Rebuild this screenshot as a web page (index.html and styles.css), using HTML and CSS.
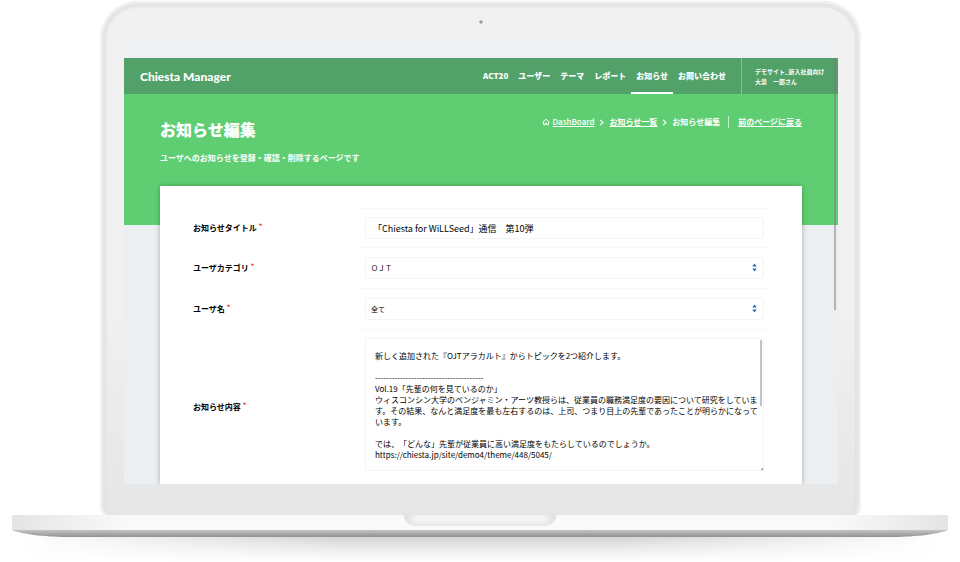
FILE: index.html
```html
<!DOCTYPE html>
<html lang="ja">
<head>
<meta charset="utf-8">
<meta name="viewport" content="width=device-width, initial-scale=1">
<title>お知らせ編集</title>
<link rel="stylesheet" href="styles.css">
</head>
<body>
<div class="lid">
  <div class="camera"></div>
  <div class="screen">
    <div class="strip"></div>
    <header class="bar">
      <a class="brand" href="#">Chiesta Manager</a>
      <nav class="nav">
        <a href="#">ACT20</a>
        <a href="#">ユーザー</a>
        <a href="#">テーマ</a>
        <a href="#">レポート</a>
        <a href="#" class="active">お知らせ</a>
        <a href="#">お問い合わせ</a>
      </nav>
      <div class="user">デモサイト_新入社員向け<br>大泉　一郎さん</div>
    </header>
    <main class="page">
      <div class="hero">
        <div>
          <h1>お知らせ編集</h1>
          <p>ユーザへのお知らせを登録・確認・削除するページです</p>
        </div>
        <nav class="crumbs">
          <svg class="home" viewBox="0 0 8 8"><path d="M.5 4.300 4 1.200l3.500 3.100M1.600 4v2.800h1.700V5.200h1.400v1.600h1.700V4"/></svg>
          <a href="#">DashBoard</a>
          <svg class="chev" viewBox="0 0 4 6"><path d="M.8.8 3.200 3 .8 5.200"/></svg>
          <a href="#">お知らせ一覧</a>
          <svg class="chev" viewBox="0 0 4 6"><path d="M.8.8 3.200 3 .8 5.200"/></svg>
          <span>お知らせ編集</span>
          <a href="#" class="back">前のページに戻る</a>
        </nav>
      </div>
      <form class="card">
        <div class="row">
          <label for="title">お知らせタイトル<sup>*</sup></label>
          <div class="cell"><input id="title" type="text" value="「Chiesta for WiLLSeed」通信　第10弾"></div>
        </div>
        <div class="row">
          <label for="category">ユーザカテゴリ<sup>*</sup></label>
          <div class="cell">
            <select id="category"><option>ＯＪＴ</option></select>
            <svg class="arrows" viewBox="0 0 5 9"><path d="M2.500 .5 4.700 3.500H.3zM.3 5.500h4.400L2.500 8.500z"/></svg>
          </div>
        </div>
        <div class="row">
          <label for="name">ユーザ名<sup>*</sup></label>
          <div class="cell">
            <select id="name"><option>全て</option></select>
            <svg class="arrows" viewBox="0 0 5 9"><path d="M2.500 .5 4.700 3.500H.3zM.3 5.500h4.400L2.500 8.500z"/></svg>
          </div>
        </div>
        <div class="row">
          <label for="body">お知らせ内容<sup>*</sup></label>
          <div class="cell">
            <textarea id="body" rows="10">新しく追加された『OJTアラカルト』からトピックを2つ紹介します。

---------------------------------------
Vol.19「先輩の何を見ているのか」
ウィスコンシン大学のベンジャミン・アーツ教授らは、従業員の職務満足度の要因について研究をしています。その結果、なんと満足度を最も左右するのは、上司、つまり目上の先輩であったことが明らかになっています。

では、「どんな」先輩が従業員に高い満足度をもたらしているのでしょうか。
https://chiesta.jp/site/demo4/theme/448/5045/</textarea>
            <span class="thumb"></span>
            <span class="grip"></span>
          </div>
        </div>
      </form>
    </main>
    <span class="scroll"></span>
  </div>
</div>
<svg class="base" viewBox="0 0 960 47">
  <defs>
    <linearGradient id="deck"><stop offset="0" stop-color="#e4e4e4"/><stop offset=".06" stop-color="#efefef"/><stop offset=".12" stop-color="#f9f9f9"/><stop offset=".88" stop-color="#f9f9f9"/><stop offset=".94" stop-color="#efefef"/><stop offset="1" stop-color="#e4e4e4"/></linearGradient>
    <linearGradient id="under" x2="0" y2="1"><stop offset="0" stop-color="#c4c4c4"/><stop offset="1" stop-color="#929292"/></linearGradient>
    <linearGradient id="notch" x2="0" y2="1"><stop offset="0" stop-color="#f3f3f3"/><stop offset=".5" stop-color="#f3f3f3"/><stop offset="1" stop-color="#e6e6e6"/></linearGradient>
    <linearGradient id="edge"><stop offset="0" stop-color="#dedede"/><stop offset=".08" stop-color="#dedede" stop-opacity="0"/><stop offset=".92" stop-color="#dedede" stop-opacity="0"/><stop offset="1" stop-color="#dedede"/></linearGradient>
    <linearGradient id="shade" x2="0" y2="1"><stop offset="0" stop-color="#cfcfcf"/><stop offset=".4" stop-color="#e6e6e6"/><stop offset=".7" stop-color="#f4f4f4"/><stop offset="1" stop-color="#fff"/></linearGradient>
    <linearGradient id="fade"><stop offset="0" stop-color="#fff"/><stop offset=".35" stop-color="#fff" stop-opacity="0"/><stop offset=".65" stop-color="#fff" stop-opacity="0"/><stop offset="1" stop-color="#fff"/></linearGradient>
  </defs>
  <path d="M20 20h920v27H20z" fill="url(#shade)"/>
  <path d="M19 20h922v27H19z" fill="url(#fade)"/>
  <path d="M12 15h936c-12 5-38 7-58 7H70c-20 0-46-2-58-7z" fill="url(#under)"/>
  <path d="M48 20h5M371 20h5M584 20h5M902 20h5" stroke="#999" fill="none"/>
  <path d="M12 0h936v15H12z" fill="url(#deck)"/>
  <path d="M404 0h152c0 7-6 11-13 11H417c-7 0-13-4-13-11z" fill="url(#notch)"/>
  <path d="M404 0h152c0 7-6 11-13 11H417c-7 0-13-4-13-11z" fill="url(#edge)"/>
</svg>
</body>
</html>
```
FILE: styles.css
```css
* { box-sizing: border-box; }

body {
  margin: 0;
  background: #fff;
  color: #000;
  font-family: "Noto Sans CJK JP", sans-serif;
  font-size: 8px;
  line-height: 12px;
  text-spacing-trim: space-all;
  overflow: hidden;
}

a { color: inherit; text-decoration: none; }

.lid {
  position: relative;
  margin: 1px 99px -6px 100px;
  padding: 37px 23px 37px 24px;
  border-radius: 38px 38px 16px 16px;
  background: linear-gradient(#f1f1f1, #f0f0f0 60%, #e8e8e8 90%, #e6e6e6);
  box-shadow: inset 0 0 0 2px #f3f3f3, inset 0 0 0 5px #e6e6e6, inset 0 0 2px 6px #e0e0e0;
}

.camera {
  position: absolute;
  top: 19px;
  left: calc(50% - 2px);
  width: 4px;
  height: 4px;
  border: 1px solid #c4c4c4;
  border-radius: 50%;
  background: #888;
}

.screen {
  position: relative;
  background: #ebeff1;
  overflow: hidden;
}

.strip { height: 20px; background: #edf1f3; }

.bar {
  display: flex;
  align-items: stretch;
  height: 36px;
  background: #52a168;
  color: #fff;
  font-weight: 700;
}

.brand {
  margin: 0 auto 0 16px;
  font-family: Lato, sans-serif;
  font-size: 12px;
  font-weight: 900;
  line-height: 37px;
}

.nav { display: flex; margin-right: 10px; font-weight: 900; }

.nav a { padding: 0 5px; line-height: 35px; }

.nav .active { border-bottom: 2px solid #fff; }

.user {
  width: 97px;
  padding: 9px 0 0 13px;
  border-left: 1px solid #86bd95;
  font-size: 6px;
  font-weight: 700;
  line-height: 10px;
}

.page {
  padding: 0 36px;
  background: linear-gradient(#5fce72 131px, transparent 131px);
}

.hero {
  display: flex;
  justify-content: space-between;
  height: 92px;
  color: #fff;
  font-weight: 700;
}

.hero h1 { margin: 23px 0 0; font-size: 16px; font-weight: 900; line-height: 24px; }

.hero p { margin: 11px 0 0; }

.crumbs {
  display: flex;
  align-items: center;
  align-self: flex-start;
  gap: 5px;
  margin-top: 22px;
}

.crumbs a { text-decoration: underline; }

.crumbs a:first-of-type { font-weight: 500; }

.crumbs svg { fill: none; stroke: #fff; }

.home { width: 8px; height: 8px; margin-right: -2px; }

.chev { width: 5px; height: 7px; }

.crumbs .back {
  margin-left: 3px;
  padding-left: 9px;
  border-left: 1px solid #c6edcd;
}

.card {
  padding: 22px 33px 0;
  background: #fff;
  box-shadow: 0 0 5px rgba(0, 0, 0, .3);
}

.row {
  display: grid;
  grid-template-columns: 166px 1fr;
  align-items: center;
}

.row label { font-weight: 700; }

.row sup {
  margin-left: 2px;
  color: #e23b30;
  font-size: 7px;
  line-height: 0;
  vertical-align: 2px;
}

.cell {
  position: relative;
  padding: 9px 5px 9px 6px;
  border-top: 1px solid #f7f7f7;
}

.row:first-child .cell { padding-top: 8px; padding-bottom: 8px; }

.row:last-child .cell { padding-top: 8px; padding-bottom: 13px; }

input, select, textarea {
  display: block;
  width: 100%;
  height: 22px;
  margin: 0;
  border: 1px solid #f4f4f4;
  border-radius: 2px;
  outline: 0;
  background: #fff;
  color: #000;
  font-family: inherit;
}

input { padding: 0 7px; font-size: 9px; }

select { appearance: none; padding: 0 5px; font-size: 7px; }

textarea {
  height: 133px;
  padding: 11px 2px 0 9px;
  font-size: 8px;
  line-height: 11px;
  text-spacing-trim: space-all;
  overflow: hidden;
  resize: none;
}

.arrows {
  position: absolute;
  top: 15px;
  right: 12px;
  width: 5px;
  height: 9px;
  fill: #2b68b3;
}

.thumb {
  position: absolute;
  top: 10px;
  right: 7px;
  width: 2px;
  height: 66px;
  background: #c3c3c3;
}

.grip {
  position: absolute;
  right: 6px;
  bottom: 14px;
  width: 2px;
  height: 2px;
  background: linear-gradient(135deg, transparent 50%, #999 50%);
}

.scroll {
  position: absolute;
  top: 20px;
  right: 2px;
  width: 2px;
  height: 252px;
  background: rgba(120, 120, 120, .5);
}

.base { display: block; position: relative; width: 100%; }
```
